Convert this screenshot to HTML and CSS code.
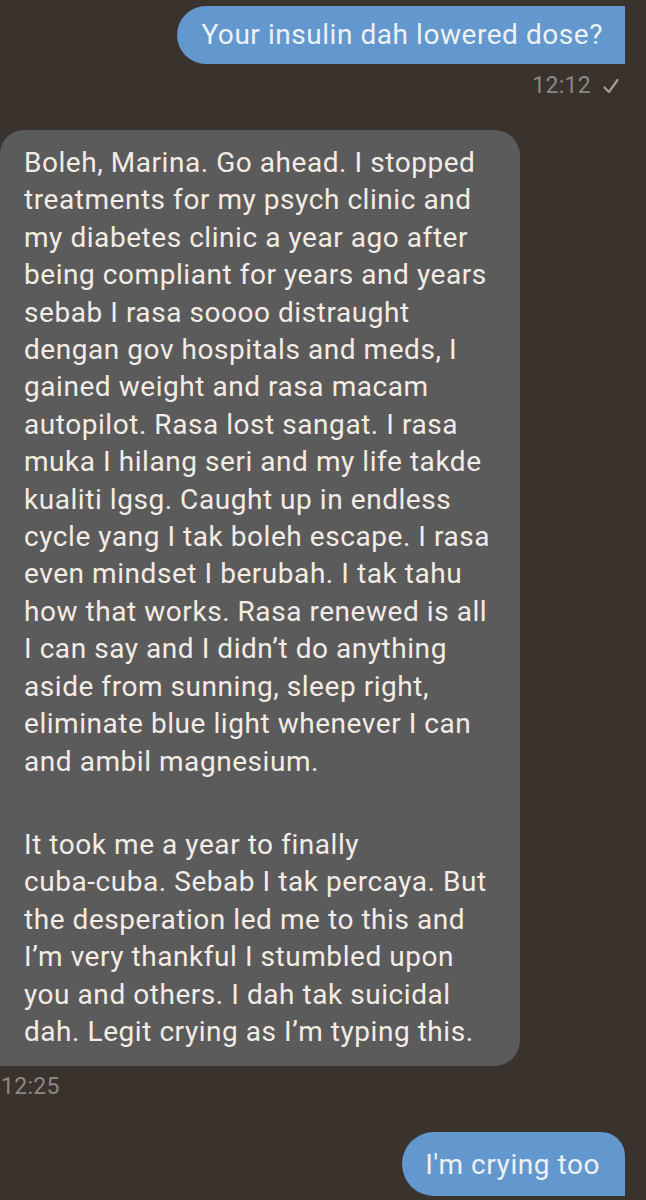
FILE: index.html
```html
<!DOCTYPE html>
<html>
<head>
<meta charset="utf-8">
<link rel="stylesheet" href="styles.css">
</head>
<body>
<div class="chat">
  <div class="bubble out first">Your insulin dah lowered dose?</div>
  <div class="meta out-meta"><span>12:12</span><svg class="tick" viewBox="0 0 18 18" width="18" height="18"><path d="M2.5 10.5 L7 15 L15.5 3" fill="none" stroke="currentColor" stroke-width="2.2" stroke-linecap="round" stroke-linejoin="round"/></svg></div>
  <div class="bubble in">
    <p>Boleh, Marina. Go ahead. I stopped<br>treatments for my psych clinic and<br>my diabetes clinic a year ago after<br>being compliant for years and years<br>sebab I rasa soooo distraught<br>dengan gov hospitals and meds, I<br>gained weight and rasa macam<br>autopilot. Rasa lost sangat. I rasa<br>muka I hilang seri and my life takde<br>kualiti lgsg. Caught up in endless<br>cycle yang I tak boleh escape. I rasa<br>even mindset I berubah. I tak tahu<br>how that works. Rasa renewed is all<br>I can say and I didn’t do anything<br>aside from sunning, sleep right,<br>eliminate blue light whenever I can<br>and ambil magnesium.</p>
    <p>It took me a year to finally<br>cuba-cuba. Sebab I tak percaya. But<br>the desperation led me to this and<br>I’m very thankful I stumbled upon<br>you and others. I dah tak suicidal<br>dah. Legit crying as I’m typing this.</p>
  </div>
  <div class="meta in-meta">12:25</div>
  <div class="bubble out last">I'm crying too</div>
</div>
</body>
</html>
```
FILE: styles.css
```css
html, body {
  margin: 0;
  padding: 0;
  background: #3a322d;
  height: 1200px;
  overflow: hidden;
}
.chat {
  display: flex;
  flex-direction: column;
  padding-top: 6px;
  font-family: Roboto, "Liberation Sans", sans-serif;
}
.bubble {
  font-size: 28px;
  line-height: 37.4px;
  letter-spacing: 0.55px;
  white-space: nowrap;
}
.out {
  align-self: flex-end;
  margin-right: 21px;
  background: #6398cf;
  color: #eef1f4;
}
.first {
  height: 58px;
  box-sizing: border-box;
  padding: 0 22px 0 24px;
  display: flex;
  align-items: center;
  border-radius: 29px 0 0 29px;
}
.meta {
  font-size: 23px;
  letter-spacing: 0.3px;
  color: #8c8782;
  line-height: 26px;
}
.out-meta {
  align-self: flex-end;
  margin-right: 26px;
  margin-top: 9px;
  display: flex;
  align-items: center;
  gap: 11px;
}
.tick {
  color: #a29d98;
}
.in {
  margin-top: 31px;
  width: 520px;
  box-sizing: border-box;
  padding: 14px 24px 16px;
  background: #5c5b5c;
  color: #f3ece4;
  border-radius: 24px 26px 26px 0;
}
.in p {
  margin: 0;
}
.in p + p {
  margin-top: 46px;
}
.in-meta {
  margin-top: 8px;
  margin-left: 1px;
}
.last {
  margin-top: 32px;
  height: 64px;
  box-sizing: border-box;
  padding: 0 25px 0 23px;
  display: flex;
  align-items: center;
  border-radius: 32px 24px 0 32px;
}
```
